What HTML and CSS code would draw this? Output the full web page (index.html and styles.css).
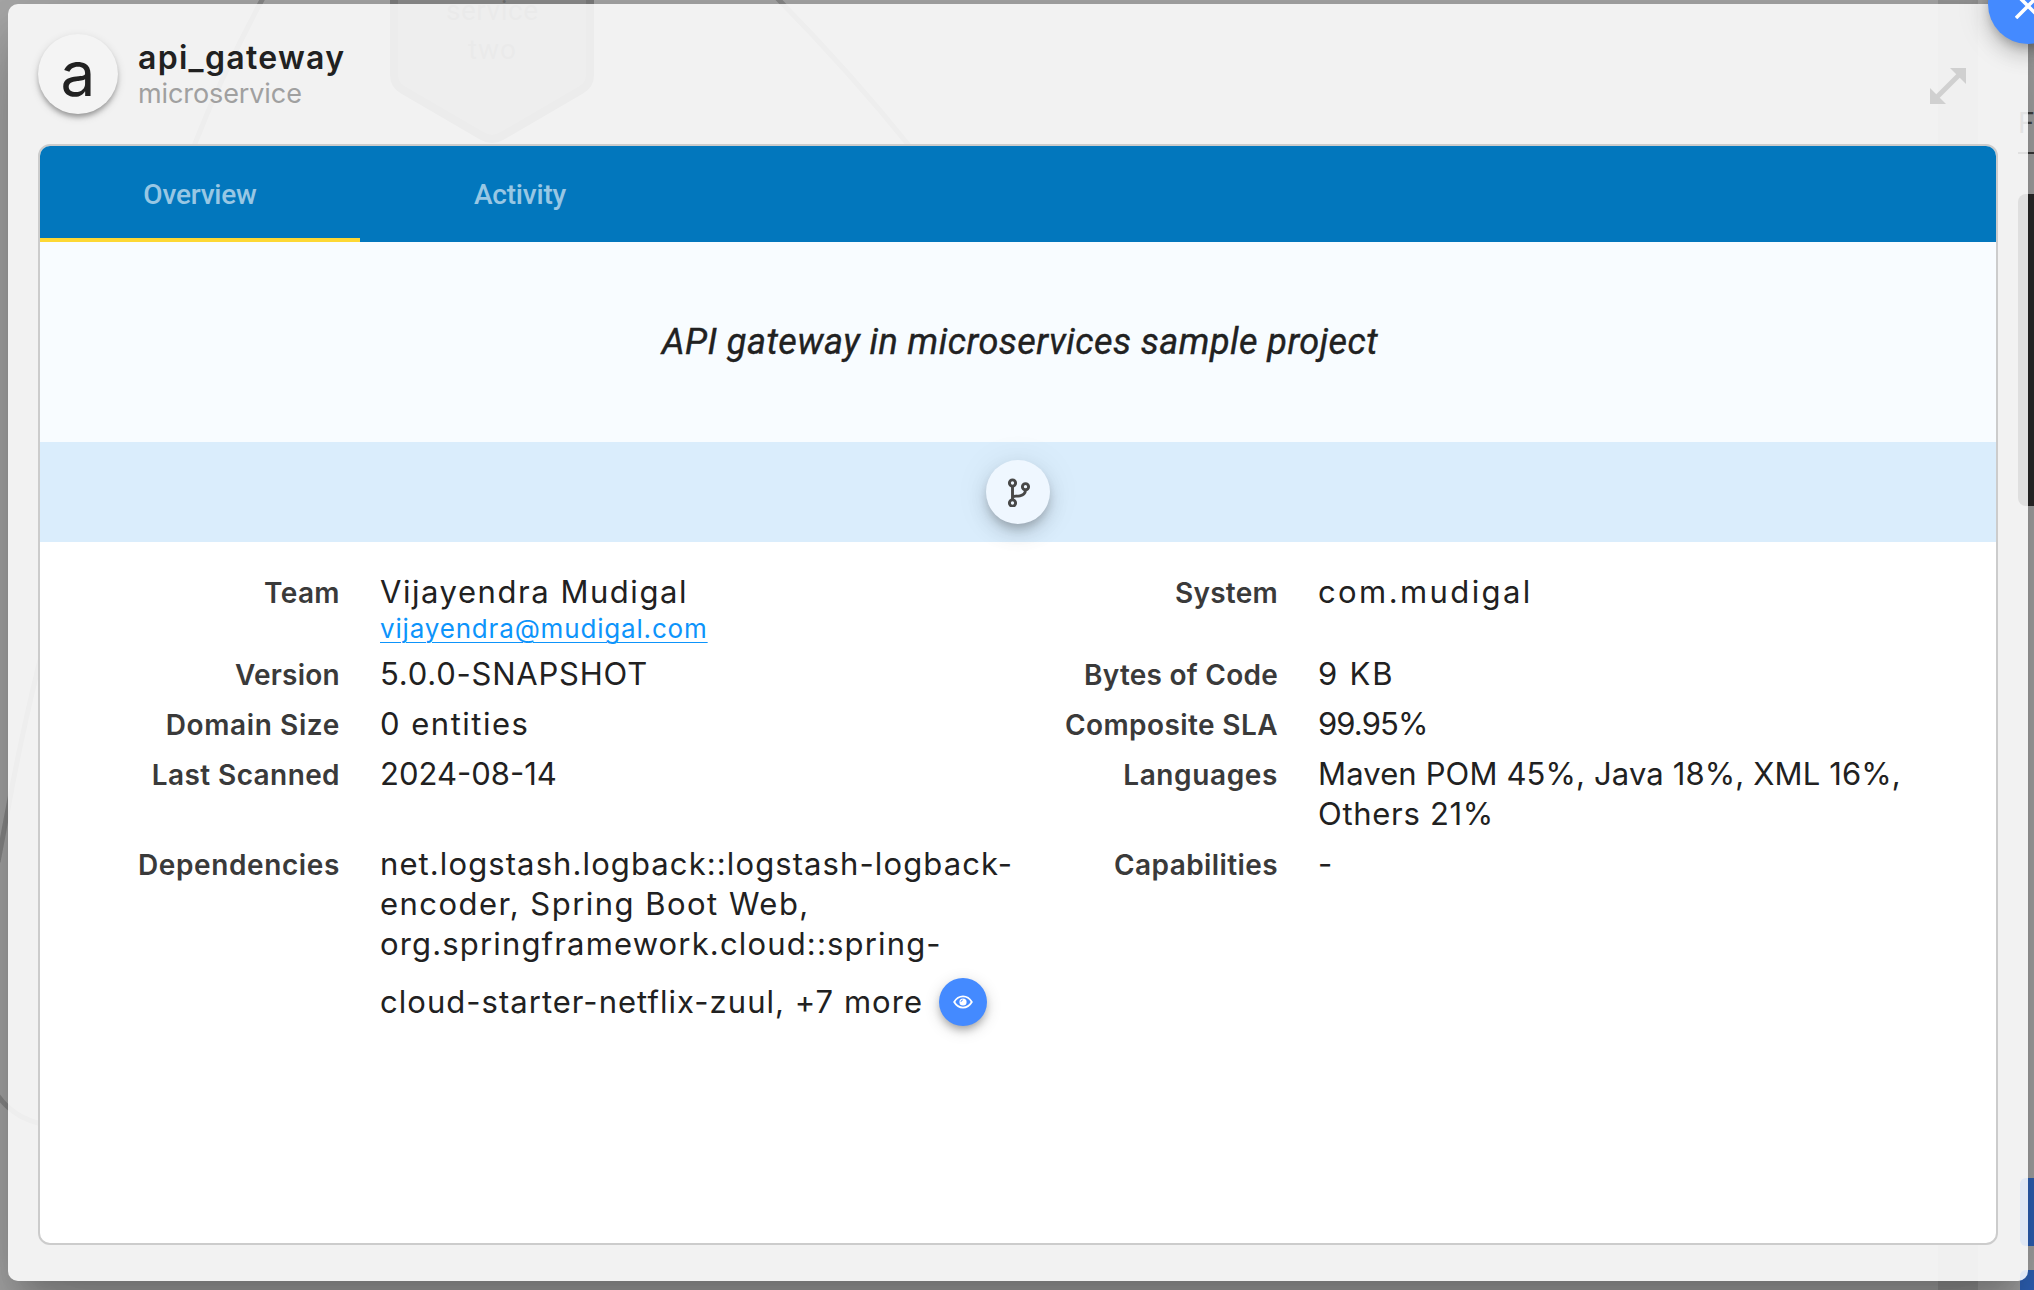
FILE: index.html
```
<!DOCTYPE html>
<html lang="en">
<head>
<meta charset="utf-8">
<title>api_gateway</title>
<link rel="stylesheet" href="styles.css">
</head>
<body>
<div class="backdrop">
  <svg class="diagram" width="2034" height="1290" viewBox="0 0 2034 1290">
    <rect x="1938" y="0" width="40" height="1290" fill="#989898"/>
    <g fill="none" stroke="#8a8a8a" stroke-width="5">
      <path d="M263 -2Q222 74 194 146Q110 400 38 668Q20 742 8 809L-2 862"/>
      <path d="M-2 1096Q14 1118 42 1124"/>
      <path d="M777 -2Q850 72 911 148"/>
    </g>
    <path d="M394 -40V75Q394 85 403 90L482 136Q492 142 502 136L581 90Q590 85 590 75V-40Z" fill="#8d8d8d" stroke="#7e7e7e" stroke-width="8"/>
    <g class="node-label">
      <text x="446" y="20" textLength="92">service</text>
      <text x="468" y="59" textLength="48">two</text>
    </g>
    <text class="side-label" x="2018" y="133">F</text>
    <rect x="2018" y="152" width="30" height="2" fill="#3a3a3a"/>
    <rect x="2018" y="194" width="40" height="312" rx="8" fill="#2b2b2b"/>
    <rect x="2020" y="1178" width="40" height="68" rx="6" fill="#2f64bb"/>
    <rect x="2020" y="1270" width="40" height="68" rx="6" fill="#2f64bb"/>
  </svg>
</div>

<section class="dialog">
  <header class="dialog-header">
    <div class="avatar"><span>a</span></div>
    <div class="titles">
      <h1 class="title">api_gateway</h1>
      <p class="subtitle">microservice</p>
    </div>
    <svg class="expand" width="36" height="36" viewBox="0 0 36 36">
      <path d="M20 0H36V16ZM0 20V36H16Z" fill="#d0d0d0"/>
      <path d="M7 29L29 7" stroke="#d0d0d0" stroke-width="5"/>
    </svg>
  </header>

  <div class="card">
    <nav class="tabs">
      <a class="tab tab-active">Overview</a>
      <a class="tab tab-activity">Activity</a>
    </nav>
    <p class="description">API gateway in microservices sample project</p>
    <div class="links">
      <a class="repo">
        <svg width="28" height="32" viewBox="0 0 28 32" fill="none" stroke="#484848" stroke-width="2.9">
          <circle cx="7.5" cy="8" r="3.1"/>
          <circle cx="7.5" cy="28" r="3.1"/>
          <circle cx="20.5" cy="11.7" r="3.1"/>
          <path d="M7.5 11V25M7.5 22C9 20.5 11 21.6 15 20.8C19 20 20.3 18.5 20.5 15"/>
        </svg>
      </a>
    </div>
    <dl class="details">
      <dt class="team">Team</dt>
      <dd><span class="line team-name">Vijayendra Mudigal</span><a class="mail">vijayendra@mudigal.com</a></dd>
      <dt class="system">System</dt>
      <dd><span class="line system-name">com.mudigal</span></dd>

      <dt class="version">Version</dt>
      <dd><span class="line version-no">5.0.0-SNAPSHOT</span></dd>
      <dt class="bytes">Bytes of Code</dt>
      <dd><span class="line size">9 KB</span></dd>

      <dt class="domain">Domain Size</dt>
      <dd><span class="line entities">0 entities</span></dd>
      <dt class="sla">Composite SLA</dt>
      <dd><span class="line percent">99.95%</span></dd>

      <dt class="scanned">Last Scanned</dt>
      <dd><span class="line">2024-08-14</span></dd>
      <dt class="languages">Languages</dt>
      <dd><span class="line shares">Maven POM 45%, Java 18%, XML 16%,</span><span class="line others">Others 21%</span></dd>

      <dt class="dependencies">Dependencies</dt>
      <dd>
        <span class="line dep-a">net.logstash.logback::logstash-logback-</span>
        <span class="line dep-b">encoder, Spring Boot Web,</span>
        <span class="line dep-c">org.springframework.cloud::spring-</span>
        <span class="line dep-more">cloud-starter-netflix-zuul, +7 more
          <a class="view">
            <svg width="20" height="14" viewBox="0 0 20 14" fill="none" stroke="#fff">
              <path d="M1.2 7C5.5 -0.4 14.5 -0.4 18.8 7C14.5 14.4 5.5 14.4 1.2 7Z" stroke-width="1.8"/>
              <circle cx="10" cy="7" r="3.6" fill="#fff" stroke="none"/>
              <path d="M8 6.8A2 2 0 0 1 9.8 5" stroke="#448aff" stroke-width="1"/>
            </svg>
          </a>
        </span>
      </dd>
      <dt class="capabilities">Capabilities</dt>
      <dd><span class="line">-</span></dd>
    </dl>
  </div>
  <a class="close">
    <svg width="26" height="26" viewBox="0 0 26 26" stroke="#fff" stroke-width="3.6">
      <path d="M1 1L25 25M25 1L1 25"/>
    </svg>
  </a>
</section>
</body>
</html>
```
FILE: styles.css
```
* { box-sizing: border-box; }

html, body {
  margin: 0;
  height: 100%;
  overflow: hidden;
}

body {
  padding: 4px 6px 9px 8px;
  background: #a9a9a9;
  color: #212121;
  font-family: Inter, "Open Sans", sans-serif;
}

h1, p, dl, dd { margin: 0; }

/* Dimmed page behind the dialog */
.backdrop {
  position: absolute;
  inset: 0;
  overflow: hidden;
}
.diagram { display: block; }
.node-label {
  font: 400 28px Roboto, sans-serif;
  fill: #727272;
}
.side-label {
  font: 400 29px Roboto, sans-serif;
  fill: #444;
}

.dialog {
  position: relative;
  display: flex;
  flex-direction: column;
  height: 1277px;
  padding: 30px 30px 36px;
  border-radius: 10px;
  background: rgba(255, 255, 255, .85);
  box-shadow:
    0 22px 30px -14px rgba(0, 0, 0, .2),
    0 48px 76px 6px rgba(0, 0, 0, .14),
    0 18px 92px 16px rgba(0, 0, 0, .12);
}

.dialog-header {
  display: flex;
  align-items: flex-start;
  height: 110px;
}
.avatar {
  width: 80px;
  height: 80px;
  border-radius: 50%;
  background: #f4f4f4;
  box-shadow: 0 4px 5px -1px rgba(0, 0, 0, .3), 0 3px 10px rgba(0, 0, 0, .14);
  font-size: 62px;
  line-height: 79px;
  text-align: center;
}
.titles {
  flex: 1;
  padding: 5px 0 0 20px;
}
.title {
  font-size: 32px;
  font-weight: 600;
  line-height: 38px;
  letter-spacing: 1.3px;
}
.subtitle {
  color: #a0a0a0;
  font-size: 27px;
  line-height: 34px;
  letter-spacing: -.1px;
}
.expand {
  margin: 34px 32px 0 0;
}

.card {
  flex: 1;
  overflow: hidden;
  border: 2px solid #ccc;
  border-radius: 12px;
  background: #fff;
}

.tabs {
  display: flex;
  height: 96px;
  background: #0277bd;
}
.tab {
  width: 320px;
  border-bottom: 4px solid transparent;
  color: rgba(255, 255, 255, .6);
  font: 500 28px/97px Roboto, sans-serif;
  letter-spacing: -.2px;
  text-align: center;
}
.tab-active { border-color: #fdd835; }

.description {
  height: 200px;
  background: #f8fcff;
  font: italic 400 36px/201px Roboto, sans-serif;
  letter-spacing: .48px;
  text-align: center;
  padding-left: 4px;
  -webkit-text-stroke: .4px #212121;
}

.links {
  display: flex;
  align-items: center;
  justify-content: center;
  height: 100px;
  background: #daedfc;
}
.repo {
  display: flex;
  justify-content: center;
  width: 64px;
  height: 64px;
  padding: 15px 0 0 1px;
  border-radius: 50%;
  background: #eff7ff;
  box-shadow:
    0 6px 10px -2px rgba(0, 0, 0, .2),
    0 10px 20px rgba(0, 0, 0, .12),
    0 2px 36px rgba(0, 0, 0, .08);
}

.details {
  display: grid;
  grid-template-columns: 300px 638px 300px 1fr;
  padding-top: 25px;
}
dt {
  padding: 6px 0 4px;
  color: #3a3a3a;
  font-size: 28px;
  font-weight: 600;
  line-height: 40px;
  letter-spacing: .4px;
  text-align: right;
}
dd {
  padding: 5px 0 5px 40px;
  font-size: 31px;
  line-height: 40px;
  white-space: nowrap;
}
.line { display: block; }

.mail {
  display: block;
  height: 32px;
  color: #0d94fb;
  font-size: 26px;
  line-height: 33px;
  letter-spacing: .83px;
  text-decoration: underline;
  text-decoration-thickness: 1px;
  text-underline-offset: 4px;
}

.version, .system, .bytes { letter-spacing: .25px; }
.domain, .dependencies, .languages { letter-spacing: .62px; }
.team-name { letter-spacing: 1.55px; }
.system-name { letter-spacing: 2.4px; }
.version-no { letter-spacing: .78px; }
.size { letter-spacing: 1.8px; }
.entities { letter-spacing: 1.5px; }
.percent { letter-spacing: -.9px; }
.shares { letter-spacing: .13px; }
.others { letter-spacing: .7px; }
.dep-a { letter-spacing: 1.1px; }
.dep-b { letter-spacing: 1.47px; }
.dep-c { letter-spacing: 1.16px; }

.dep-more {
  display: flex;
  align-items: center;
  gap: 16px;
  height: 76px;
  letter-spacing: 1.03px;
}
.view {
  display: flex;
  flex: none;
  align-items: center;
  justify-content: center;
  width: 48px;
  height: 48px;
  border-radius: 50%;
  background: #448aff;
  box-shadow: 0 5px 8px -2px rgba(0, 0, 0, .3), 0 4px 16px rgba(0, 0, 0, .16);
}

.close {
  position: absolute;
  top: -40px;
  right: -40px;
  display: flex;
  align-items: center;
  justify-content: center;
  width: 80px;
  height: 80px;
  padding-top: 4px;
  border-radius: 50%;
  background: #448aff;
  box-shadow:
    0 6px 10px -2px rgba(0, 0, 0, .2),
    0 12px 20px rgba(0, 0, 0, .14),
    0 2px 36px rgba(0, 0, 0, .12);
}
```
